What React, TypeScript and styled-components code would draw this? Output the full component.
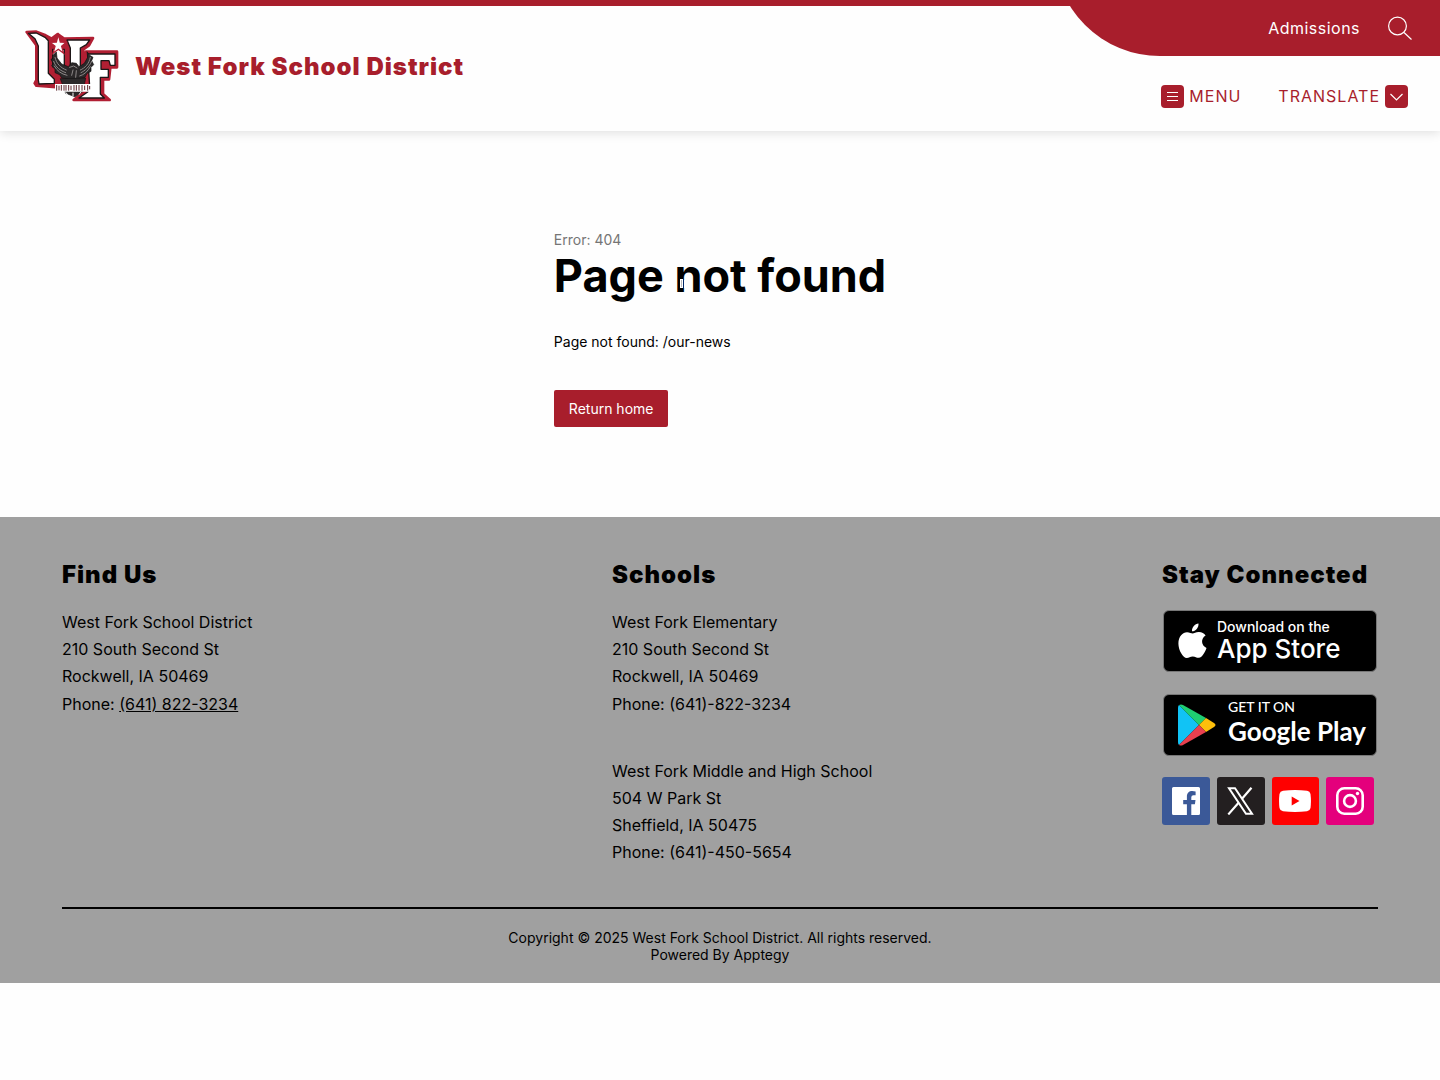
import React from "react";
import styled, { createGlobalStyle } from "styled-components";

const brandRed = "#a81e2c";

const GlobalStyle = createGlobalStyle`
  *, *::before, *::after { box-sizing: border-box; }
  body {
    margin: 0;
    background: #fefefe;
    color: #000;
    font-family: Inter, "Liberation Sans", sans-serif;
    font-size: 16px;
  }
  h1, h2, p { margin: 0; }
  a { color: inherit; text-decoration: none; }
  button { font: inherit; color: inherit; background: none; border: 0; padding: 0; cursor: pointer; }
  svg { display: block; }
`;

const Header = styled.header`
  display: flex;
  justify-content: space-between;
  align-items: stretch;
  overflow: hidden;
  border-top: 6px solid ${brandRed};
  background: #fefefe;
  box-shadow: 0 2px 10px rgba(0, 0, 0, 0.12);
`;

const Brand = styled.a`
  display: flex;
  align-items: center;
  gap: 16px;
  padding: 0 0 5px 25px;
  color: ${brandRed};
  font-size: 24px;
  font-weight: 900;
  letter-spacing: 1px;
`;

const HeaderTools = styled.div`
  display: flex;
  flex-direction: column;
  align-items: flex-end;
`;

const UtilityNav = styled.nav`
  display: flex;
  align-items: center;
  gap: 28px;
  height: 106px;
  margin-top: -56px;
  padding: 50px 28px 0 214px;
  border-bottom-left-radius: 106px;
  background: ${brandRed};
  color: #fff;
  letter-spacing: 0.03em;
`;

const MainNav = styled.nav`
  display: flex;
  align-items: center;
  gap: 37px;
  padding: 29px 32px 23px 0;
`;

const NavButton = styled.button`
  display: flex;
  align-items: center;
  gap: 5px;
  color: ${brandRed};
  letter-spacing: 1px;
  line-height: 23px;
`;

const IconTile = styled.span`
  display: grid;
  place-items: center;
  width: 23px;
  height: 23px;
  border-radius: 4px;
  background: ${brandRed};
`;

const Main = styled.main`
  display: flex;
  justify-content: center;
  padding: 100px 24px 90px;
`;

const ErrorCode = styled.p`
  color: #757575;
  font-size: 14px;
  line-height: 17px;
`;

const ErrorTitle = styled.h1`
  position: relative;
  font-size: 45px;
  font-weight: 700;
  line-height: 55px;
`;

const BusyMark = styled.svg`
  position: absolute;
  top: 31px;
  left: 126px;
`;

const ErrorText = styled.p`
  margin-top: 30px;
  font-size: 14px;
  line-height: 17px;
`;

const HomeLink = styled.a`
  display: inline-block;
  margin-top: 40px;
  padding: 10px 15px;
  border-radius: 2px;
  background: ${brandRed};
  color: #fff;
  font-size: 14px;
  line-height: 17px;
`;

const Footer = styled.footer`
  padding: 40px 62px 20px;
  background: #a0a0a0;
`;

const FooterColumns = styled.div`
  display: grid;
  grid-template-columns: 1fr 1fr 216px;
  padding-bottom: 40px;
  border-bottom: 2px solid #000;
`;

const FooterHeading = styled.h2`
  margin-bottom: 16px;
  font-size: 24px;
  font-weight: 900;
  line-height: 36px;
  letter-spacing: 1px;
`;

const Address = styled.p`
  line-height: 1.7;
  & + & { margin-top: 40px; }
`;

const PhoneLink = styled.a`
  text-decoration: underline;
`;

const BadgeList = styled.div`
  display: flex;
  flex-direction: column;
  gap: 22px;
  padding: 1px 1px 21px;
`;

const StoreBadge = styled.a<{ $gap: number }>`
  display: flex;
  align-items: center;
  gap: ${(p) => p.$gap}px;
  height: 62px;
  padding-left: 14px;
  border: 1px solid #777;
  border-radius: 6px;
  background: #000;
  color: #fff;
`;

const AppleText = styled.span`
  display: flex;
  flex-direction: column;
  padding-top: 2px;
  white-space: nowrap;
`;

const GoogleText = styled(AppleText)`
  gap: 2px;
  padding: 0 0 4px;
  font-family: Lato, sans-serif;
`;

const BadgeSmall = styled.span`
  font-size: 14px;
  font-weight: 500;
  line-height: 14px;
`;

const BadgeLarge = styled.span<{ $weight: number }>`
  font-size: 26px;
  font-weight: ${(p) => p.$weight};
  line-height: 30px;
`;

const SocialRow = styled.div`
  display: grid;
  grid-template-columns: repeat(4, 1fr);
  gap: 7px;
  padding-right: 4px;
`;

const SocialLink = styled.a<{ $color: string }>`
  display: grid;
  place-items: center;
  height: 48px;
  border-radius: 3px;
  background: ${(p) => p.$color};
`;

const Legal = styled.p`
  padding-top: 20px;
  font-size: 14px;
  line-height: 17px;
  text-align: center;
`;

const DistrictLogo = () => (
  <svg width="94" height="72" viewBox="28 30 282 216" role="img" aria-label="West Fork logo">
    <g stroke="#b11f33" strokeWidth="8" strokeLinejoin="round" fill="#b11f33">
      <path d="M33 36 L62 35 L90 46 L108 56 L126 42 L145 56 L232 54 L220 76 L203 88 L203 170 L150 204 L62 197 L57 190 L62 180 L62 76 Z" />
      <path d="M210 95 L304 95 L304 142 L284 142 L280 178 L262 178 L262 222 L282 240 L174 240 L200 218 L200 110 Z" />
    </g>
    <g stroke="#1d1617" strokeWidth="4" strokeLinejoin="round" fill="#fff">
      <path d="M38 40 L62 39 L88 52 L98 62 L98 160 L116 178 L116 190 L70 192 L68 180 L68 78 L58 56 Z" />
      <path d="M111 88 H146 V140 H111 Z" />
      <path d="M154 60 L222 60 L212 74 L194 84 L194 150 L164 150 L164 84 Z" />
      <path d="M216 102 L298 102 L298 136 L284 136 L280 122 L256 122 L256 148 L278 148 L278 172 L254 172 L254 222 L266 234 L190 234 L216 216 L222 200 Z" />
    </g>
    <path d="M128 44 L134 66 L152 67 L138 79 L144 100 L128 88 L112 100 L118 79 L103 67 L122 66 Z" fill="#fff" stroke="#b11f33" strokeWidth="4" />
    <g fill="#2b2829" stroke="#111" strokeWidth="2" strokeLinejoin="round">
      <path d="M122 96 L112 106 L114 114 L106 118 L112 130 L108 138 L118 148 L118 158 L132 164 L138 174 L156 176 L164 188 L186 188 L192 176 L208 172 L214 160 L226 154 L226 142 L234 134 L228 122 L232 112 L222 106 L214 95 L216 112 L206 130 L190 140 L182 130 L168 128 L158 140 L138 132 L124 114 Z" />
      <path d="M134 176 L210 174 L202 214 L178 230 L150 220 Z" />
    </g>
    <g stroke="#8d8888" strokeWidth="3" fill="none" strokeLinecap="round">
      <path d="M118 112 C122 132 136 144 152 150" />
      <path d="M114 124 C120 142 134 152 150 158" />
      <path d="M116 138 C124 152 136 162 154 166" />
      <path d="M224 112 C220 132 208 144 194 150" />
      <path d="M228 124 C220 142 208 152 196 158" />
      <path d="M224 140 C216 154 206 164 192 168" />
      <path d="M162 142 L174 138 L184 144 M172 150 L168 166 M182 152 L180 172" />
    </g>
    <path d="M120 194 H224 V213 H120 Z" fill="#fff" stroke="#fff" strokeWidth="4" />
    <path
      d="M123 195 V212 M130 197 V211 M137 195 V212 M145 195 V212 M151 195 V212 M159 195 V212 M166 197 V210 M175 195 V212 M182 195 V212 M190 195 V212 M199 195 V212 M207 197 V210 M216 195 V212 M222 198 V208"
      stroke="#5e2a31"
      strokeWidth="3"
    />
    <path d="M150 217 L156 224 M172 218 V228 M196 216 L190 224" stroke="#fff" strokeWidth="3" />
  </svg>
);

const SearchIcon = () => (
  <svg width="24" height="24" viewBox="0 0 24 24" fill="none" stroke="#fff" strokeWidth="1.2">
    <circle cx="9.5" cy="10" r="8.9" />
    <path d="M16 16.5 L23.5 23.5" />
  </svg>
);

const AppleIcon = () => (
  <svg width="29" height="36" viewBox="0 0 29 36" fill="#fff">
    <path d="M20.5 0.5 C20.8 4.7 17.6 8.3 14 8.3 C13.6 4.3 17 0.9 20.5 0.5 Z" />
    <path d="M14.6 10.5 C16 10.5 18 8.9 21 9 C23.8 9.1 26.2 10.4 27.6 12.6 C22.4 15.8 23.2 22.8 28.5 25 C27.3 28.4 24.4 34.6 20.8 34.8 C18.4 34.9 17.6 33.4 14.8 33.4 C12 33.4 11.1 34.8 8.8 34.9 C5.2 35 0.4 27.4 0.4 20.4 C0.4 13.4 4.8 9.3 9 9.2 C11.5 9.2 13.4 10.5 14.6 10.5 Z" />
  </svg>
);

const PlayIcon = () => (
  <svg width="38" height="42" viewBox="0 0 38 42">
    <path d="M1 1 Q0 2 0 4 V38 Q0 40 1 41 L21 21 Z" fill="#11c3f5" />
    <path d="M1 1 Q3 0 5 1 L28 14 L21 21 Z" fill="#1fcf72" />
    <path d="M28 14 L36 19 Q39 21 36 23 L28 28 L21 21 Z" fill="#fdbf0b" />
    <path d="M1 41 Q3 42 5 41 L28 28 L21 21 Z" fill="#e8404f" />
  </svg>
);

const FacebookIcon = () => (
  <svg width="28" height="28" viewBox="0 0 28 28">
    <path fill="#fff" d="M1.5 0 H26.5 Q28 0 28 1.5 V26.5 Q28 28 26.5 28 H19.3 V17.2 H22.9 L23.5 12.9 H19.3 V10.2 Q19.3 8.2 21.4 8.2 H23.6 V4.4 Q22 4.1 20.3 4.1 C17 4.1 14.9 6.1 14.9 9.6 V12.9 H11.2 V17.2 H14.9 V28 H1.5 Q0 28 0 26.5 V1.5 Q0 0 1.5 0 Z" />
  </svg>
);

const XIcon = () => (
  <svg width="27" height="28" viewBox="0 0 27 28" fill="none" stroke="#fff">
    <path strokeWidth="2" d="M2 1.3 H8 L25 26.7 H19 Z" />
    <path strokeWidth="2.2" d="M24.5 0.8 L14.8 12 M11.8 15.6 L1.3 27.4" />
  </svg>
);

const YouTubeIcon = () => (
  <svg width="32" height="22" viewBox="0 0 32 22">
    <path fill="#fff" d="M4 0.8 Q16 -0.8 28 0.8 Q31 1.2 31.5 4 Q32.4 11 31.5 18 Q31 20.8 28 21.3 Q16 22.7 4 21.3 Q1 20.8 0.5 18 Q-0.4 11 0.5 4 Q1 1.2 4 0.8 Z" />
    <path fill="#f00" d="M12.7 6.6 V15.4 L20.5 11 Z" />
  </svg>
);

const InstagramIcon = () => (
  <svg width="28" height="28" viewBox="0 0 28 28" fill="none" stroke="#fff" strokeWidth="2.6">
    <rect x="1.3" y="1.3" width="25.4" height="25.4" rx="7" />
    <circle cx="14" cy="14" r="5.9" />
    <circle cx="21.5" cy="6.5" r="1.7" fill="#fff" stroke="none" />
  </svg>
);

export default function App() {
  return (
    <>
      <GlobalStyle />
      <Header>
        <Brand href="#">
          <DistrictLogo />
          West Fork School District
        </Brand>
        <HeaderTools>
          <UtilityNav aria-label="Utility">
            <a href="#admissions">Admissions</a>
            <button type="button" aria-label="Search"><SearchIcon /></button>
          </UtilityNav>
          <MainNav aria-label="Main">
            <NavButton type="button">
              <IconTile>
                <svg width="11" height="11" viewBox="0 0 11 11" stroke="#fff" strokeWidth="1">
                  <path d="M0 1.5 H11 M0 5.5 H11 M0 9.5 H11" />
                </svg>
              </IconTile>
              MENU
            </NavButton>
            <NavButton type="button">
              TRANSLATE
              <IconTile>
                <svg width="13" height="8" viewBox="0 0 13 8" fill="none" stroke="#fff" strokeWidth="1.2">
                  <path d="M0.5 1 L6.5 7 L12.5 1" />
                </svg>
              </IconTile>
            </NavButton>
          </MainNav>
        </HeaderTools>
      </Header>

      <Main>
        <div>
          <ErrorCode>Error: 404</ErrorCode>
          <ErrorTitle>
            Page not found
            <BusyMark width="8" height="9" viewBox="0 0 8 9" aria-hidden="true">
              <path d="M0 0 H3 V9 H0 Z M4 1 H6 V9 H4 Z" fill="#fff" />
              <path d="M1 1 H2 V8 H1 Z" fill="#bbb" />
            </BusyMark>
          </ErrorTitle>
          <ErrorText>Page not found: /our-news</ErrorText>
          <HomeLink href="#">Return home</HomeLink>
        </div>
      </Main>

      <Footer>
        <FooterColumns>
          <section>
            <FooterHeading>Find Us</FooterHeading>
            <Address>
              West Fork School District<br />
              210 South Second St<br />
              Rockwell, IA 50469<br />
              Phone: <PhoneLink href="tel:6418223234">(641) 822-3234</PhoneLink>
            </Address>
          </section>
          <section>
            <FooterHeading>Schools</FooterHeading>
            <Address>
              West Fork Elementary<br />
              210 South Second St<br />
              Rockwell, IA 50469<br />
              Phone: (641)-822-3234
            </Address>
            <Address>
              West Fork Middle and High School<br />
              504 W Park St<br />
              Sheffield, IA 50475<br />
              Phone: (641)-450-5654
            </Address>
          </section>
          <section>
            <FooterHeading>Stay Connected</FooterHeading>
            <BadgeList>
              <StoreBadge href="#app-store" $gap={10}>
                <AppleIcon />
                <AppleText>
                  <BadgeSmall>Download on the</BadgeSmall>
                  <BadgeLarge $weight={500}>App Store</BadgeLarge>
                </AppleText>
              </StoreBadge>
              <StoreBadge href="#google-play" $gap={12}>
                <PlayIcon />
                <GoogleText>
                  <BadgeSmall>GET IT ON</BadgeSmall>
                  <BadgeLarge $weight={700}>Google Play</BadgeLarge>
                </GoogleText>
              </StoreBadge>
            </BadgeList>
            <SocialRow>
              <SocialLink href="#facebook" aria-label="Facebook" $color="#3b5998"><FacebookIcon /></SocialLink>
              <SocialLink href="#x" aria-label="X" $color="#231f20"><XIcon /></SocialLink>
              <SocialLink href="#youtube" aria-label="YouTube" $color="#ff0000"><YouTubeIcon /></SocialLink>
              <SocialLink href="#instagram" aria-label="Instagram" $color="#e4007c"><InstagramIcon /></SocialLink>
            </SocialRow>
          </section>
        </FooterColumns>
        <Legal>
          Copyright © 2025 West Fork School District. All rights reserved.<br />
          Powered By Apptegy
        </Legal>
      </Footer>
    </>
  );
}
